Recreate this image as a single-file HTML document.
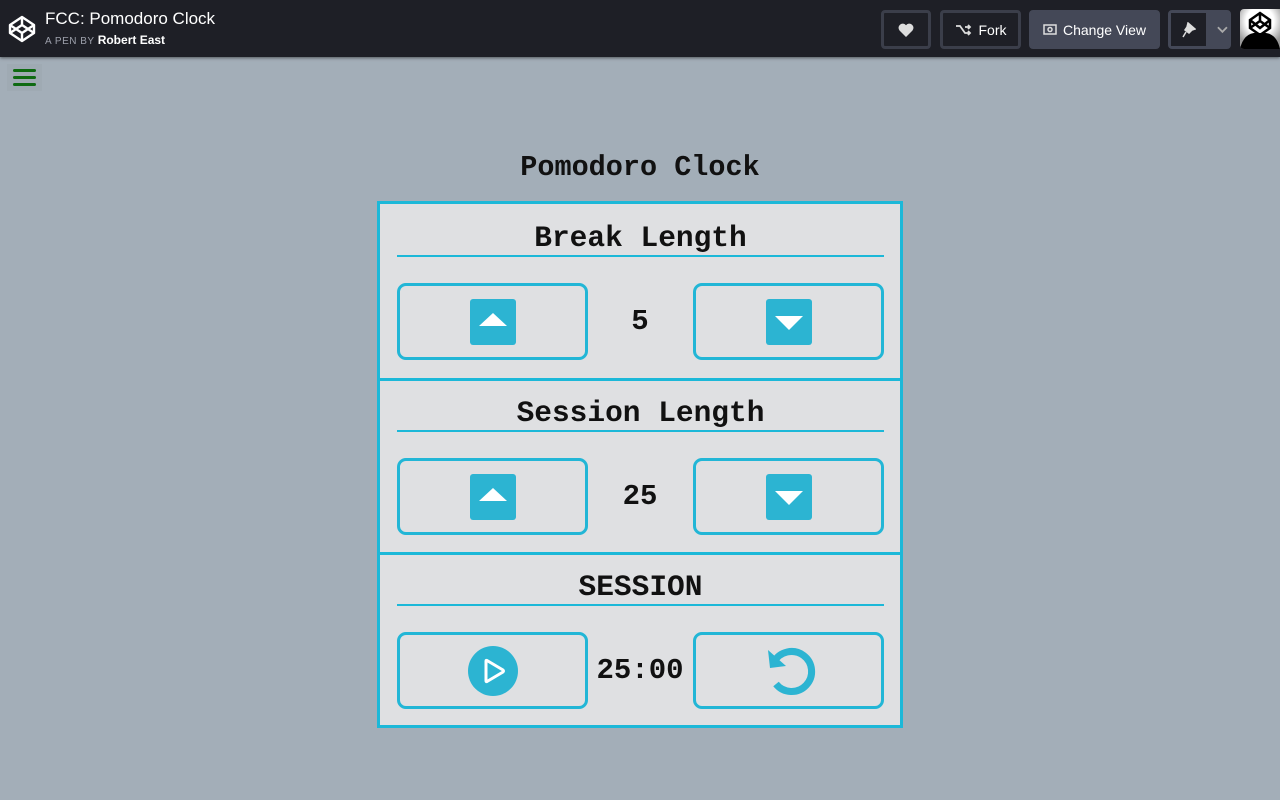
<!DOCTYPE html>
<html><head><meta charset="utf-8"><style>
*{box-sizing:border-box;margin:0;padding:0}
body{width:1280px;height:800px;background:#a3aeb8;font-family:"Liberation Sans",sans-serif;position:relative;overflow:hidden}
.hdr{position:absolute;left:0;top:0;width:1280px;height:57px;background:#1e1f26;box-shadow:0 1px 3px rgba(0,0,0,.5)}
.t1{position:absolute;left:45px;top:9px;color:#fff;font-size:17px}
.t2{position:absolute;left:45px;top:33px;color:#9da0ab;font-size:10px;letter-spacing:.5px}
.t2 b{color:#fff;font-size:12px;letter-spacing:0}
.btn{position:absolute;top:10px;height:39px;border:3px solid #3b3e4a;border-radius:4px;background:#1e1f26;color:#fff;font-size:14px;display:flex;align-items:center;justify-content:center;gap:6px}
.menu{position:absolute;left:7px;top:64px;width:35px;height:27px;background:#9faab3}
.menu i{position:absolute;left:6px;width:23px;height:3px;border-radius:2px;background:#0f6a12}
h1{position:absolute;top:151px;left:0;width:1280px;text-align:center;font:bold 28.5px "Liberation Mono",monospace;color:#111}
.box{position:absolute;left:377px;top:201px;width:526px;height:527px;border:3px solid #1cb8d8;background:#dfe0e2}
.sec{position:absolute;left:0;width:520px;height:174px}
.sec+.sec{border-top:3px solid #1cb8d8}
.sec h2{position:absolute;left:17px;top:19px;width:487px;height:34px;border-bottom:2px solid #1cb8d8;text-align:center;font:bold 29.5px "Liberation Mono",monospace;line-height:30px;color:#111}
.b{position:absolute;top:79px;width:191px;height:77px;border:3px solid #22b6d6;border-radius:9px;display:flex;align-items:center;justify-content:center}
.num{position:absolute;top:101px;left:0;width:520px;text-align:center;font:bold 29px "Liberation Mono",monospace;color:#111}
</style></head><body>
<div class="hdr">
<svg style="position:absolute;left:8px;top:15px" width="28" height="28" viewBox="0 0 28 28" fill="none" stroke="#fff" stroke-width="2.4" stroke-linejoin="round"><path d="M14 2L26 10V18L14 26L2 18V10Z M2 10L14 18L26 10 M2 18L14 10L26 18 M14 2V10 M14 18V26"/></svg>
<div class="t1">FCC: Pomodoro Clock</div>
<div class="t2">A PEN BY <b>Robert East</b></div>
<div class="btn" style="left:881px;width:50px"><svg width="16" height="14" viewBox="0 0 16 14"><path d="M8 14L1.5 7.5A3.8 3.8 0 0 1 8 2.2A3.8 3.8 0 0 1 14.5 7.5Z" fill="#ddd"/></svg></div>
<div class="btn" style="left:940px;width:81px"><svg width="18" height="12" viewBox="0 0 18 12" fill="none" stroke="#ddd" stroke-width="1.8"><path d="M1 2H5L10 9H15M10 3H15M13 1L15 3L13 5M13 7L15 9L13 11"/></svg>Fork</div>
<div class="btn" style="left:1029px;width:131px;background:#444857;border-color:#444857"><svg width="14" height="11" viewBox="0 0 14 11" fill="none" stroke="#ddd" stroke-width="1.5"><rect x="1" y="1" width="12" height="9"/><circle cx="7" cy="5.5" r="2"/></svg>Change View</div>
<div class="btn" style="left:1168px;width:63px;background:#444857;border-color:#444857;justify-content:flex-start;padding:0"><div style="width:39px;height:33px;background:#1e1f26;display:flex;align-items:center;justify-content:center"><svg width="14" height="16" viewBox="0 0 14 16"><path d="M6 1L13 7L10 8L7 11L3 8L5 5Z M4 10L1 15" fill="#ddd" stroke="#ddd" stroke-width="1.5"/></svg></div><svg style="margin-left:5px" width="12" height="8" viewBox="0 0 12 8" fill="none" stroke="#aaa" stroke-width="2"><path d="M1 1L6 6L11 1"/></svg></div>
<div style="position:absolute;left:1240px;top:9px;width:40px;height:40px;border-radius:4px 0 0 4px;background:radial-gradient(circle at 50% 30%,#fff 40%,#999 75%);overflow:hidden"><svg width="40" height="40" viewBox="0 0 40 40"><path d="M0 40Q4 22 20 24Q36 22 40 40Z" fill="#000"/><path d="M20 4L30 11V19L20 26L10 19V11Z M10 11L20 19L30 11 M20 4V12 M10 19L20 12L30 19" fill="none" stroke="#000" stroke-width="2.5"/></svg></div>
</div>
<div class="menu"><i style="top:5px"></i><i style="top:12px"></i><i style="top:19px"></i></div>
<h1>Pomodoro Clock</h1>
<div class="box">
<div class="sec" style="top:0"><h2>Break Length</h2>
<div class="b" style="left:17px"><svg width="46" height="46" viewBox="0 0 46 46"><rect width="46" height="46" rx="3" fill="#2cb4d2"/><path d="M9 27L23 14L37 27Z" fill="#fff"/></svg></div>
<div class="num">5</div>
<div class="b" style="left:313px"><svg width="46" height="46" viewBox="0 0 46 46"><rect width="46" height="46" rx="3" fill="#2cb4d2"/><path d="M9 17L23 31L37 17Z" fill="#fff"/></svg></div></div>
<div class="sec" style="top:174px"><h2 style="top:17px">Session Length</h2>
<div class="b" style="left:17px;top:77px"><svg width="46" height="46" viewBox="0 0 46 46"><rect width="46" height="46" rx="3" fill="#2cb4d2"/><path d="M9 27L23 14L37 27Z" fill="#fff"/></svg></div>
<div class="num" style="top:99px">25</div>
<div class="b" style="left:313px;top:77px"><svg width="46" height="46" viewBox="0 0 46 46"><rect width="46" height="46" rx="3" fill="#2cb4d2"/><path d="M9 17L23 31L37 17Z" fill="#fff"/></svg></div></div>
<div class="sec" style="top:348px"><h2 style="top:17px">SESSION</h2>
<div class="b" style="left:17px;top:77px"><svg width="52" height="52" viewBox="0 0 52 52"><circle cx="26" cy="26" r="25" fill="#2cb4d2"/><path d="M19 16Q19 15 20 15.5L36 25Q37 26 36 27L20 36.5Q19 37 19 36Z" fill="none" stroke="#fff" stroke-width="3" stroke-linejoin="round"/></svg></div>
<div class="num" style="top:99px">25:00</div>
<div class="b" style="left:313px;top:77px"><svg width="54" height="54" viewBox="0 0 54 54"><path d="M12 18A20 20 0 1 1 14 40" fill="none" stroke="#2cb4d2" stroke-width="7"/><path d="M6 6L8 24L24 22Z" fill="#2cb4d2"/></svg></div></div>
</div>
</body></html>
